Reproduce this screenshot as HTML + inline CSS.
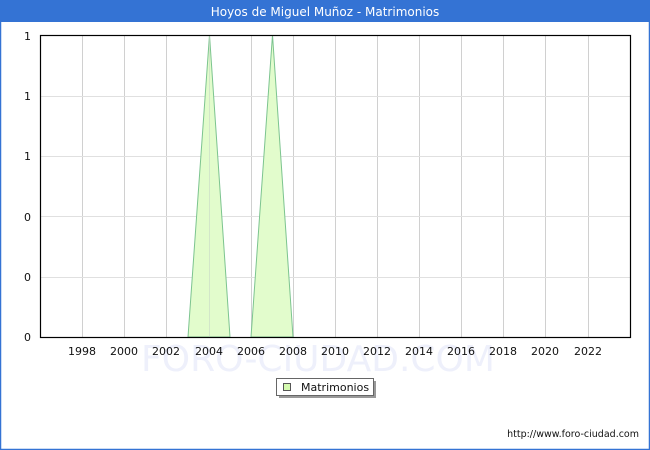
<!DOCTYPE html>
<html><head><meta charset="utf-8"><style>
html,body{margin:0;padding:0;background:#fff}
svg{display:block}
</style></head><body>
<svg width="650" height="450" xmlns="http://www.w3.org/2000/svg" font-family="'DejaVu Sans','Liberation Sans',sans-serif">
<rect x="0" y="0" width="650" height="450" fill="#fff"/>
<rect x="0.5" y="0.5" width="649" height="449" fill="none" stroke="#3473d4" stroke-width="1.5"/>
<rect x="0" y="0" width="650" height="22" fill="#3473d4"/>
<text x="325" y="16" fill="#fff" font-size="12" text-anchor="middle">Hoyos de Miguel Muñoz - Matrimonios</text>
<text x="318" y="371" fill="#eef0fb" font-size="36" text-anchor="middle">FORO-CIUDAD.COM</text>
<g stroke="#d0d0d0" stroke-width="1">
<line x1="82.5" y1="35" x2="82.5" y2="337"/><line x1="124.5" y1="35" x2="124.5" y2="337"/>
<line x1="166.5" y1="35" x2="166.5" y2="337"/><line x1="209.5" y1="35" x2="209.5" y2="337"/>
<line x1="251.5" y1="35" x2="251.5" y2="337"/><line x1="293.5" y1="35" x2="293.5" y2="337"/>
<line x1="335.5" y1="35" x2="335.5" y2="337"/><line x1="377.5" y1="35" x2="377.5" y2="337"/>
<line x1="419.5" y1="35" x2="419.5" y2="337"/><line x1="461.5" y1="35" x2="461.5" y2="337"/>
<line x1="503.5" y1="35" x2="503.5" y2="337"/><line x1="545.5" y1="35" x2="545.5" y2="337"/>
<line x1="588.5" y1="35" x2="588.5" y2="337"/>
</g>
<g stroke="#e0e0e0" stroke-width="1">
<line x1="40" y1="96.5" x2="630" y2="96.5"/><line x1="40" y1="156.5" x2="630" y2="156.5"/>
<line x1="40" y1="216.5" x2="630" y2="216.5"/><line x1="40" y1="277.5" x2="630" y2="277.5"/>
</g>
<polygon points="188,337 209.5,35 230,337" fill="#e2fccc" stroke="#7cc48f" stroke-width="1"/>
<polygon points="251,337 272.5,35 293,337" fill="#e2fccc" stroke="#7cc48f" stroke-width="1"/>
<line x1="209.5" y1="35" x2="209.5" y2="337" stroke="#c8d8c8" stroke-width="1" opacity="0.6"/>
<rect x="40.5" y="35.5" width="590" height="302" fill="none" stroke="#000" stroke-width="1.2"/>
<g font-size="11" fill="#111" text-anchor="end">
<text x="31" y="40">1</text><text x="31" y="100">1</text><text x="31" y="160">1</text>
<text x="31" y="221">0</text><text x="31" y="281">0</text><text x="31" y="341">0</text>
</g>
<g font-size="11" fill="#111" text-anchor="middle">
<text x="82" y="355">1998</text><text x="124" y="355">2000</text><text x="166" y="355">2002</text>
<text x="209" y="355">2004</text><text x="251" y="355">2006</text><text x="293" y="355">2008</text>
<text x="335" y="355">2010</text><text x="377" y="355">2012</text><text x="419" y="355">2014</text>
<text x="461" y="355">2016</text><text x="503" y="355">2018</text><text x="545" y="355">2020</text>
<text x="588" y="355">2022</text>
</g>
<rect x="279" y="381" width="97" height="17" fill="#999"/>
<rect x="276.5" y="378.5" width="97" height="17" fill="#fff" stroke="#666" stroke-width="1"/>
<rect x="283.5" y="383.5" width="7" height="7" fill="#d5fbb0" stroke="#555" stroke-width="1"/>
<text x="301" y="391" font-size="11" fill="#111">Matrimonios</text>
<text x="639" y="437" font-size="9.5" fill="#111" text-anchor="end">http://www.foro-ciudad.com</text>
</svg>
</body></html>
